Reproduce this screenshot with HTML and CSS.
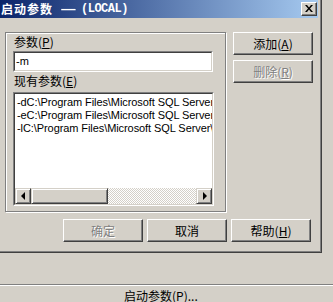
FILE: index.html
```html
<!DOCTYPE html>
<html>
<head>
<meta charset="utf-8">
<link rel="stylesheet" href="styles.css">
</head>
<body>
<div class="window">
  <div class="frame">
    <div class="titlebar">
      <span class="title-cjk">启动参数</span><span class="title-dash">—</span><span class="title-local">(LOCAL)</span>
      <div class="close">
        <svg width="8" height="7" viewBox="0 0 8 7"><path d="M0 0h2l2 2.4L6 0h2L5 3.5 8 7H6L4 4.6 2 7H0l3-3.5z" fill="#000"/></svg>
      </div>
    </div>
    <div class="content">
      <div class="group">
        <div class="label">参数(<u>P</u>)</div>
        <div class="field input"><div class="field-in">-m</div></div>
        <div class="label label2">现有参数(<u>E</u>)</div>
        <div class="field list">
          <div class="field-in list-in">
            <div class="lines">
              <div class="line">-dC:\Program Files\Microsoft SQL Server\MSSQL\data\master.mdf</div>
              <div class="line">-eC:\Program Files\Microsoft SQL Server\MSSQL\log\ERRORLOG</div>
              <div class="line">-lC:\Program Files\Microsoft SQL Server\MSSQL\data\mastlog.ldf</div>
            </div>
            <div class="hscroll">
              <div class="sbtn"><span class="arrow-left"></span></div>
              <div class="thumb"></div>
              <div class="track"></div>
              <div class="sbtn"><span class="arrow-right"></span></div>
            </div>
          </div>
        </div>
      </div>
      <div class="side">
        <div class="btn">添加(<u>A</u>)</div>
        <div class="btn disabled">删除(<u>R</u>)</div>
      </div>
    </div>
    <div class="bottom">
      <div class="btn disabled">确定</div>
      <div class="btn">取消</div>
      <div class="btn">帮助(<u>H</u>)</div>
    </div>
  </div>
</div>
<div class="status">启动参数(P)...</div>
</body>
</html>
```

FILE: styles.css
```css
html, body {
  margin: 0;
  padding: 0;
}
body {
  width: 333px;
  height: 302px;
  overflow: hidden;
  background: #D4D0C8;
  font-family: "Noto Sans CJK SC", "Liberation Sans", sans-serif;
  font-size: 12px;
  color: #000;
}
u { text-decoration: underline; text-underline-offset: 1px; }

.window {
  width: 321px;
  border-right: 1px solid #404040;
  border-bottom: 1px solid #404040;
}
.frame {
  width: 318px;
  height: 251px;
  padding-right: 2px;
  border-right: 1px solid #808080;
  border-bottom: 1px solid #808080;
}

.titlebar {
  height: 18px;
  display: flex;
  align-items: center;
  padding-left: 1px;
  background: linear-gradient(to right, #0A246A, #A6CAF0);
  color: #fff;
  font-weight: bold;
  line-height: 18px;
}
.title-cjk {
  font-size: 12px;
  letter-spacing: 1px;
}
.title-dash {
  margin-left: 9px;
  font-family: "Liberation Sans", sans-serif;
  font-size: 13px;
  transform: scaleX(1.1);
}
.title-local {
  margin-left: 6px;
  font-family: "Liberation Mono", monospace;
  font-size: 12px;
  letter-spacing: -0.5px;
}
.close {
  margin-left: auto;
  margin-right: 1px;
  width: 14px;
  height: 12px;
  background: #D4D0C8;
  border: 1px solid;
  border-color: #fff #404040 #404040 #fff;
  box-shadow: inset -1px -1px #808080;
  display: flex;
  align-items: center;
  justify-content: center;
}
.close svg { display: block; margin-top: -1px; }

.content {
  display: flex;
  gap: 7px;
  padding: 14px 0 0 5px;
}
.group {
  box-sizing: border-box;
  width: 221px;
  height: 180px;
  border: 1px solid #808080;
  box-shadow: inset 1px 1px #fff, 1px 1px #fff;
  padding: 2px 0 0 7px;
}
.label {
  line-height: 14px;
  height: 14px;
  padding-left: 1px;
}
.label2 { margin-top: 2px; }

.field {
  box-sizing: border-box;
  border: 1px solid;
  border-color: #808080 #fff #fff #808080;
}
.field-in {
  box-sizing: border-box;
  height: 100%;
  border: 1px solid;
  border-color: #404040 #D4D0C8 #D4D0C8 #404040;
  background: #fff;
}
.input {
  margin-top: 2px;
  width: 200px;
  height: 21px;
}
.input .field-in {
  font-family: "Liberation Sans", sans-serif;
  font-size: 11px;
  line-height: 17px;
  padding-left: 1px;
}
.list {
  margin-top: 4px;
  width: 201px;
  height: 114px;
}
.list-in {
  display: flex;
  flex-direction: column;
  overflow: hidden;
}
.lines {
  flex: 1;
  padding: 2px 0 0 2px;
  font-family: "Liberation Sans", sans-serif;
  font-size: 11px;
  letter-spacing: -0.08px;
  line-height: 13px;
  overflow: hidden;
}
.line { white-space: nowrap; }

.hscroll {
  display: flex;
  height: 16px;
}
.sbtn {
  box-sizing: border-box;
  width: 16px;
  height: 16px;
  background: #D4D0C8;
  border: 1px solid;
  border-color: #D4D0C8 #404040 #404040 #D4D0C8;
  box-shadow: inset 1px 1px #fff, inset -1px -1px #808080;
  display: flex;
  align-items: center;
  justify-content: center;
}
.arrow-left {
  width: 0; height: 0;
  border-top: 4px solid transparent;
  border-bottom: 4px solid transparent;
  border-right: 4px solid #000;
  margin-left: -1px;
}
.arrow-right {
  width: 0; height: 0;
  border-top: 4px solid transparent;
  border-bottom: 4px solid transparent;
  border-left: 4px solid #000;
  margin-left: 1px;
}
.thumb {
  box-sizing: border-box;
  width: 77px;
  height: 16px;
  background: #D4D0C8;
  border: 1px solid;
  border-color: #D4D0C8 #404040 #404040 #D4D0C8;
  box-shadow: inset 1px 1px #fff, inset -1px -1px #808080;
}
.track {
  flex: 1;
  background-image: repeating-conic-gradient(#fff 0 25%, #D4D0C8 0 50%);
  background-size: 2px 2px;
}

.side {
  display: flex;
  flex-direction: column;
  gap: 5px;
}
.btn {
  box-sizing: border-box;
  width: 80px;
  height: 23px;
  border: 1px solid;
  border-color: #fff #404040 #404040 #fff;
  box-shadow: inset -1px -1px #808080;
  background: #D4D0C8;
  display: flex;
  align-items: center;
  justify-content: center;
  line-height: 14px;
}
.btn.disabled {
  color: #808080;
  text-shadow: 1px 1px #fff;
}

.bottom {
  display: flex;
  justify-content: flex-end;
  gap: 4px;
  padding-right: 7px;
  margin-top: 7px;
}

.status {
  margin-top: 31px;
  border-top: 1px solid #808080;
  box-shadow: inset 0 1px #fff;
  padding: 4px 0 0 124px;
  line-height: 14px;
}
```
